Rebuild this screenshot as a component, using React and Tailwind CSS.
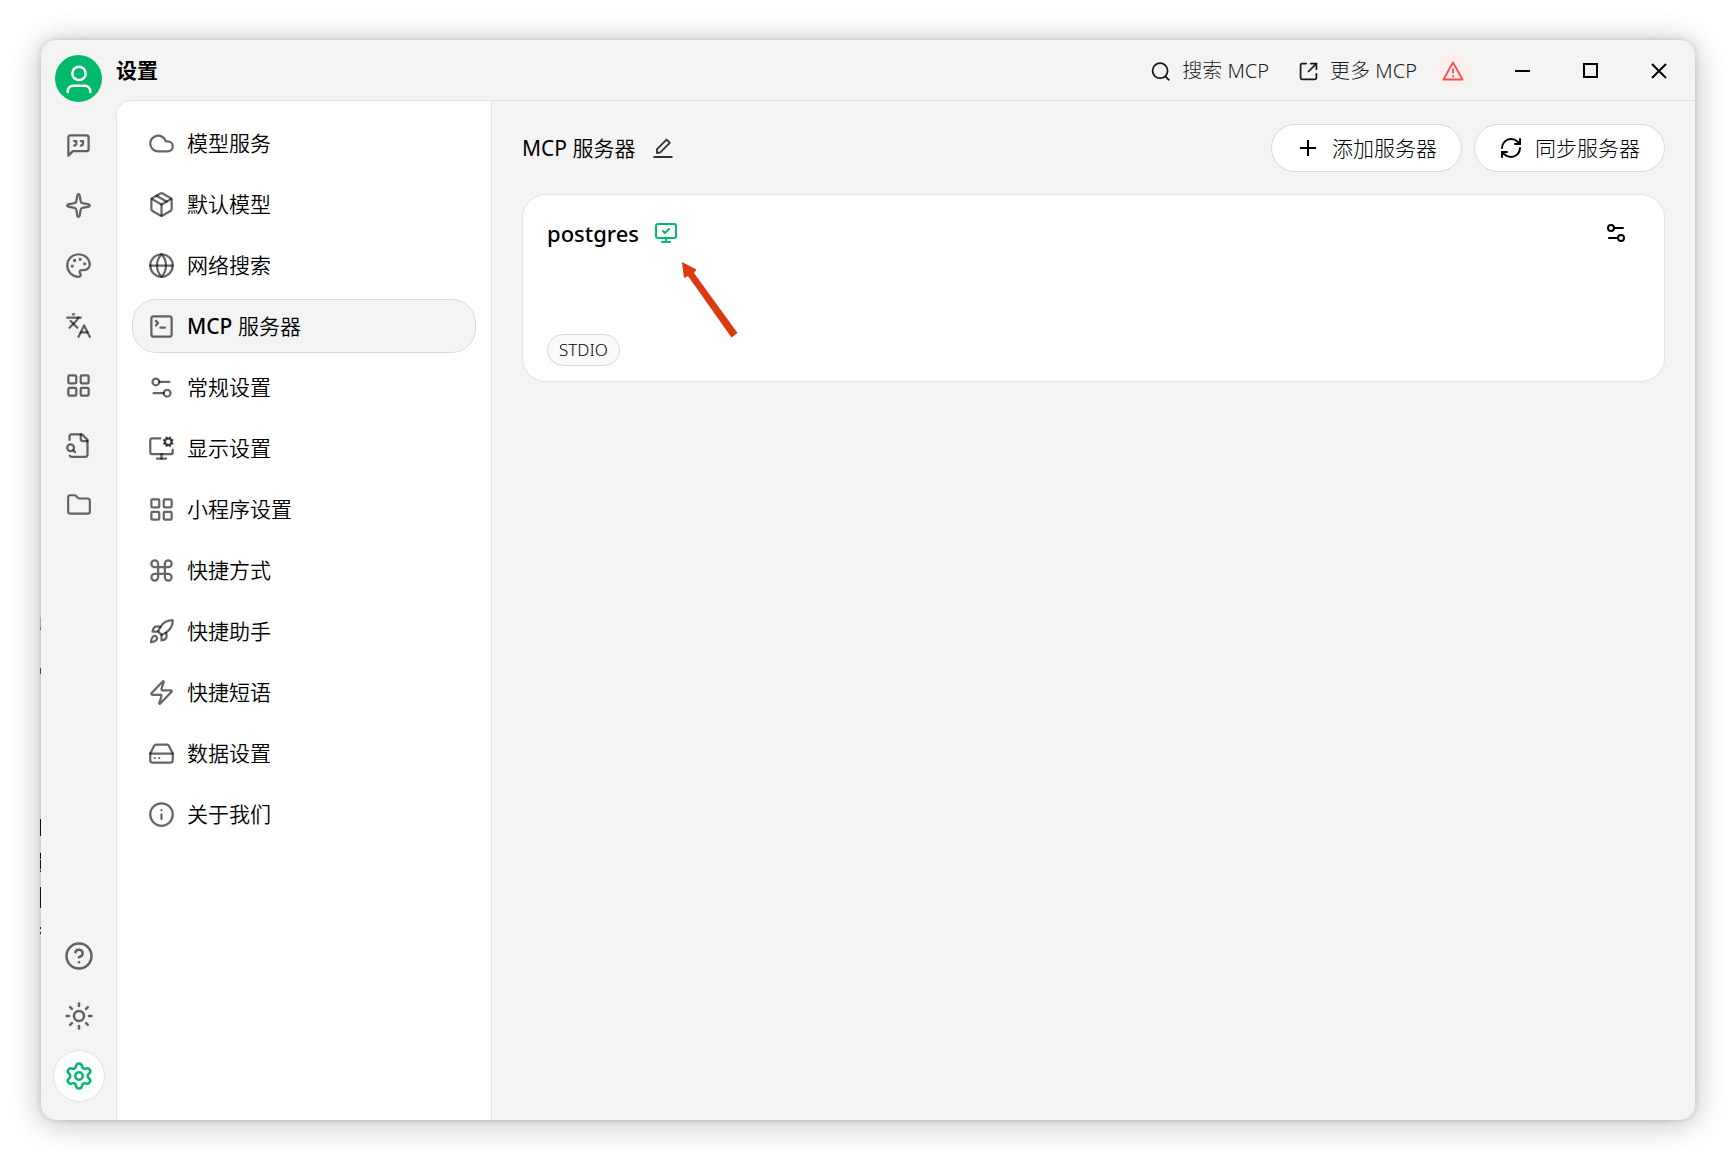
import React from 'react';
import {
  Cloud,
  Command,
  Folder,
  Globe,
  HardDrive,
  Info,
  Languages,
  LayoutGrid,
  MonitorCheck,
  MonitorCog,
  Package,
  Palette,
  RefreshCw,
  Rocket,
  Settings,
  Settings2,
  Sparkle,
  SquareTerminal,
  Sun,
  Zap,
} from 'lucide-react';

const Icon = ({ size = 27, strokeWidth = 2, className = '', children }) => (
  <svg
    viewBox="0 0 24 24"
    width={size}
    height={size}
    fill="none"
    stroke="currentColor"
    strokeWidth={strokeWidth}
    strokeLinecap="round"
    strokeLinejoin="round"
    className={className}
    aria-hidden="true"
  >
    {children}
  </svg>
);

const ChatIcon = (props) => (
  <Icon {...props}>
    <path d="M21 15a2 2 0 0 1-2 2H7l-4 4V5a2 2 0 0 1 2-2h14a2 2 0 0 1 2 2z" />
    <path d="M8 12a2 2 0 0 0 2-2V8H8" />
    <path d="M14 12a2 2 0 0 0 2-2V8h-2" />
  </Icon>
);

const FileSearchIcon = (props) => (
  <Icon {...props}>
    <path d="M14 2v4a2 2 0 0 0 2 2h4" />
    <path d="M4.268 21a2 2 0 0 0 1.727 1H18a2 2 0 0 0 2-2V7l-5-5H6a2 2 0 0 0-2 2v3" />
    <path d="m9 18-1.5-1.5" />
    <circle cx="5" cy="14" r="3" />
  </Icon>
);

const HelpIcon = (props) => (
  <Icon {...props}>
    <circle cx="12" cy="12" r="10" />
    <path d="M9.09 9a3 3 0 0 1 5.83 1c0 2-3 3-3 3" />
    <path d="M12 17h.01" />
  </Icon>
);

const UserIcon = () => (
  <Icon size={30} strokeWidth={2}>
    <circle cx="12" cy="7.5" r="5.3" />
    <path d="M3 22.4v-.8a4.2 4.2 0 0 1 4.2-4.2h9.6a4.2 4.2 0 0 1 4.2 4.2v.8" />
  </Icon>
);

const SearchIcon = () => (
  <Icon size={19} strokeWidth={2.2}>
    <circle cx="11.5" cy="11" r="9.5" />
    <path d="m18.5 18.5 4 4" />
  </Icon>
);

const ExportIcon = () => (
  <Icon size={19} strokeWidth={2.2}>
    <path d="M9 2H4a2 2 0 0 0-2 2v16a2 2 0 0 0 2 2h16a2 2 0 0 0 2-2v-5" />
    <path d="M15 2h7v7" />
    <path d="M22 2 12 12" />
  </Icon>
);

const WarningIcon = () => (
  <svg viewBox="0 0 22 20" width="22" height="20" fill="none" stroke="currentColor" strokeWidth="1.8" aria-hidden="true">
    <path d="M11 1.5 20.5 18.5H1.5z" strokeLinejoin="round" />
    <path d="M11 7.5v5M11 14.2v2" />
  </svg>
);

const EditIcon = () => (
  <svg viewBox="0 0 20 20" width="20" height="20" fill="none" stroke="currentColor" strokeWidth="1.8" aria-hidden="true">
    <path d="M4 15v-3.8L13.6 1.6l3.2 3.2L7.3 14.3z" strokeLinejoin="round" />
    <path d="M.5 19h19" />
  </svg>
);

// Slivers of the document lying under the window, seen at its left edge
const PageBehind = () => (
  <svg className="absolute left-10 top-0" width="1" height="1000" aria-hidden="true">
    <rect y="617" width="1" height="10" fill="#aaa" />
    <rect y="627" width="1" height="3" fill="#0a9ad6" />
    <rect y="668" width="1" height="6" fill="#444" />
    <rect y="819" width="1" height="17" fill="#111" />
    <rect y="853" width="1" height="6" fill="#111" />
    <rect y="860" width="1" height="9" fill="#111" />
    <rect y="870" width="1" height="2" fill="#333" />
    <rect y="887" width="1" height="21" fill="#111" />
    <rect y="927" width="1" height="2" fill="#222" />
    <rect y="932" width="1" height="2" fill="#222" />
  </svg>
);

const railItems = [
  { label: '聊天', icon: ChatIcon },
  { label: '智能体', icon: Sparkle },
  { label: '绘画', icon: Palette },
  { label: '翻译', icon: Languages },
  { label: '小程序', icon: LayoutGrid },
  { label: '知识库', icon: FileSearchIcon },
  { label: '文件', icon: Folder, size: 26 },
];

const menuItems = [
  { label: '模型服务', icon: Cloud },
  { label: '默认模型', icon: Package },
  { label: '网络搜索', icon: Globe },
  { label: 'MCP 服务器', icon: SquareTerminal, active: true },
  { label: '常规设置', icon: Settings2 },
  { label: '显示设置', icon: MonitorCog },
  { label: '小程序设置', icon: LayoutGrid },
  { label: '快捷方式', icon: Command },
  { label: '快捷助手', icon: Rocket },
  { label: '快捷短语', icon: Zap },
  { label: '数据设置', icon: HardDrive },
  { label: '关于我们', icon: Info },
];

const RailButton = ({ label, active, children }) => (
  <button
    type="button"
    aria-label={label}
    className={`flex size-[52px] items-center justify-center rounded-full ${
      active ? 'border border-[#e3e3e3] bg-white text-[#00b96b]' : 'text-black/60'
    }`}
  >
    {children}
  </button>
);

const Rail = () => (
  <aside className="flex w-[75px] shrink-0 flex-col items-center pt-[15px] pb-[18px]">
    <button type="button" aria-label="用户" className="mb-[17px] flex size-[47px] shrink-0 items-center justify-center rounded-full bg-[#00b96b] text-white">
      <UserIcon />
    </button>
    <nav className="flex flex-1 flex-col gap-2">
      {railItems.map(({ label, icon: Glyph, size = 27 }) => (
        <RailButton key={label} label={label}>
          <Glyph size={size} strokeWidth={2} />
        </RailButton>
      ))}
    </nav>
    <div className="flex flex-col gap-2">
      <RailButton label="帮助">
        <HelpIcon size={30} strokeWidth={2} />
      </RailButton>
      <RailButton label="主题">
        <Sun size={30} strokeWidth={2} />
      </RailButton>
      <RailButton label="设置" active>
        <Settings size={30} strokeWidth={2} />
      </RailButton>
    </div>
  </aside>
);

const TitleBar = () => (
  <header className="flex h-[60px] shrink-0 items-center">
    <h1 className="flex-1 text-[21px] leading-7 font-bold">设置</h1>
    <div className="flex items-center pt-0.5 text-[20px] leading-7 font-light text-black/90">
      <a href="#search" className="mr-[30px] flex items-center gap-3">
        <SearchIcon />
        <span>搜索 MCP</span>
      </a>
      <a href="#more" className="mr-[18px] flex items-center gap-3">
        <ExportIcon />
        <span>更多 MCP</span>
      </a>
      <button type="button" aria-label="警告" className="mr-[18px] flex size-9 items-center justify-center rounded-full bg-[#fff0ee] text-[#ff4d4f]">
        <WarningIcon />
      </button>
    </div>
    <div className="flex h-full pt-0.5 pr-0.5 text-black">
      <button type="button" aria-label="最小化" className="flex w-[68px] items-center justify-center">
        <svg width="16" height="16" stroke="currentColor" strokeWidth="2" fill="none"><path d="M0 8h15" /></svg>
      </button>
      <button type="button" aria-label="最大化" className="flex w-[68px] items-center justify-center">
        <svg width="16" height="16" stroke="currentColor" strokeWidth="2" fill="none"><path d="M1 1h13v13H1z" /></svg>
      </button>
      <button type="button" aria-label="关闭" className="flex w-[68px] items-center justify-center">
        <svg width="16" height="16" stroke="currentColor" strokeWidth="2" fill="none"><path d="m1 1 14 14M15 1 1 15" /></svg>
      </button>
    </div>
  </header>
);

const SettingsMenu = () => (
  <nav className="w-[375px] shrink-0 border-r border-[#e3e3e3] bg-white px-[15px] pt-[15px]">
    <ul className="flex flex-col gap-[7px]">
      {menuItems.map(({ label, icon: Glyph, active }) => (
        <li key={label}>
          <a
            href="#settings"
            className={`flex h-[54px] items-center gap-3 rounded-[24px] border px-[15px] text-[21px] leading-7 ${
              active ? 'border-[#dcdcdc] bg-[#f4f4f4] font-medium' : 'border-transparent font-[350]'
            }`}
          >
            <Glyph size={27} strokeWidth={2} className="text-black/60" />
            {active ? (
              <span>
                MCP <span className="font-[350]">服务器</span>
              </span>
            ) : (
              <span>{label}</span>
            )}
          </a>
        </li>
      ))}
    </ul>
  </nav>
);

const ServerCard = () => (
  <article className="relative flex h-[188px] flex-col justify-between rounded-[24px] border border-[#e3e3e3] bg-white pt-[22px] pr-9 pb-[15px] pl-6">
    <div className="flex items-center">
      <h3 className="text-[22px] leading-8 font-medium">postgres</h3>
      <MonitorCheck size={24} strokeWidth={2} className="ml-[15px] text-[#00b96b]" />
      <button type="button" aria-label="服务器设置" className="ml-auto">
        <Settings2 size={24} strokeWidth={2} />
      </button>
    </div>
    <span className="flex h-8 items-center self-start rounded-full border border-[#d9d9d9] bg-[#fafafa] px-[11px] text-[17px] leading-6 font-light">
      STDIO
    </span>
    <svg className="absolute left-[159px] top-[67px]" width="56" height="76" fill="#db3a12" aria-hidden="true">
      <path d="M0 0 14.5 7.5 12 11 55.5 71 49.5 75.5 6 14 2 16z" />
    </svg>
  </article>
);

const Servers = () => (
  <main className="min-w-0 flex-1 px-[30px] pt-[23px]">
    <div className="mb-[22px] flex items-center gap-3">
      <h2 className="text-[21px] leading-7">
        MCP <span className="font-[350]">服务器</span>
      </h2>
      <button type="button" aria-label="编辑" className="ml-1.5 mr-auto text-[#333]">
        <EditIcon />
      </button>
      <button type="button" className="flex h-12 items-center gap-3 rounded-full border border-[#d9d9d9] bg-white px-6 text-[21px] leading-7 font-light">
        <Icon size={24} strokeWidth={2}>
          <path d="M4 12h16M12 4v16" strokeLinecap="butt" />
        </Icon>
        添加服务器
      </button>
      <button type="button" className="flex h-12 items-center gap-3 rounded-full border border-[#d9d9d9] bg-white px-6 text-[21px] leading-7 font-light">
        <RefreshCw size={24} strokeWidth={2} />
        同步服务器
      </button>
    </div>
    <ServerCard />
  </main>
);

const App = () => (
  <div
    lang="zh-CN"
    className="relative flex min-h-screen bg-white p-10 pl-[41px] text-black [font-family:'Noto_Sans','Noto_Sans_CJK_SC',sans-serif]"
  >
    <PageBehind />
    <div className="flex flex-1 overflow-hidden rounded-[15px] bg-[#f4f4f4] shadow-[0_0_6px_rgba(0,0,0,0.16),0_3px_32px_rgba(0,0,0,0.26)]">
      <Rail />
      <div className="flex min-w-0 flex-1 flex-col">
        <TitleBar />
        <div className="flex flex-1 overflow-hidden rounded-tl-[15px] border-t border-l border-[#e3e3e3]">
          <SettingsMenu />
          <Servers />
        </div>
      </div>
    </div>
  </div>
);

export default App;
